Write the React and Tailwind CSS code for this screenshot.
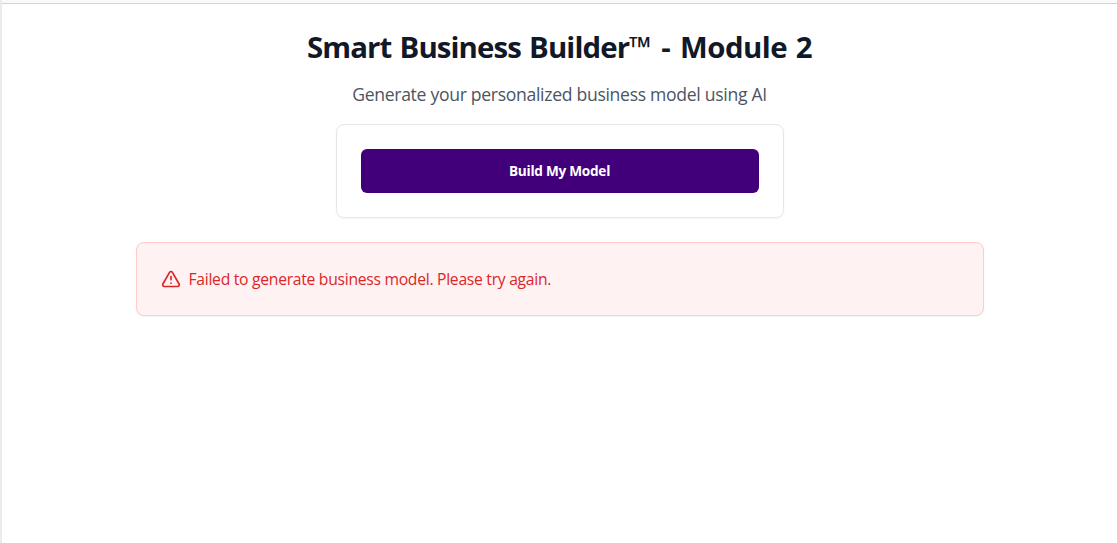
import { TriangleAlert } from "lucide-react";

export default function App() {
  return (
    <div className="h-[543px] border-l-2 border-[#ebebeb] bg-white font-['Open_Sans','Noto_Sans',sans-serif]">
      <div className="h-1 border-b border-[#d2d2d2] bg-[#fafafa]" />
      <main className="flex flex-col items-center pt-[26px]">
        <h1 className="h-9 text-[29.4px] leading-[35px] font-bold tracking-[-0.9px] whitespace-nowrap text-[#111827] [word-spacing:1.5px]">
          Smart Business Builder™ <span className="mx-[2px]">-</span> <span className="tracking-[-0.5px]">Module 2</span>
        </h1>
        <p className="mt-3.5 h-7 text-[17.6px] leading-7 tracking-[-0.31px] whitespace-nowrap text-[#4b5563]">Generate your personalized business model using AI</p>
        <div className="mt-4 h-[94px] w-[448px] rounded-lg border border-[#e5e7eb] p-6 shadow-xs">
          <button className="flex h-11 w-full items-center justify-center rounded-md bg-[#41007a] text-[13.6px] font-bold tracking-[-0.25px] text-white">Build My Model</button>
        </div>
        <div className="mt-6 flex h-[74px] w-[848px] items-center gap-2 rounded-lg border border-[#fecaca] bg-[#fef2f2] px-6 text-[#dc2626] shadow-xs">
          <TriangleAlert size={20} />
          <span className="text-[15.7px] leading-6 tracking-[-0.28px] whitespace-nowrap">Failed to generate business model. Please try again.</span>
        </div>
      </main>
    </div>
  );
}
